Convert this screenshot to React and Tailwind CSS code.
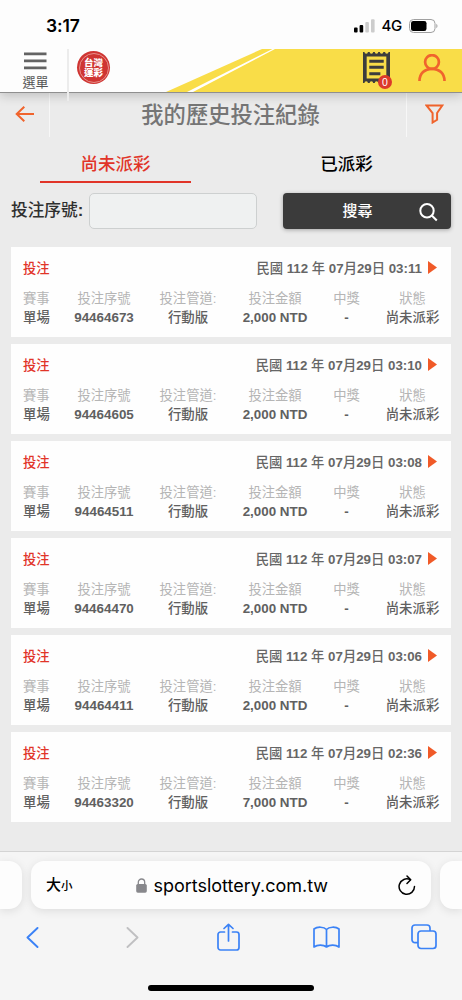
const FONT = 'font-["Liberation_Sans","Noto_Sans_CJK_TC",sans-serif]';

const records = [
  { id: '94464673', time: '03:11', amount: '2,000' },
  { id: '94464605', time: '03:10', amount: '2,000' },
  { id: '94464511', time: '03:08', amount: '2,000' },
  { id: '94464470', time: '03:07', amount: '2,000' },
  { id: '94464411', time: '03:06', amount: '2,000' },
  { id: '94463320', time: '02:36', amount: '7,000' },
];

function StatusBar() {
  return (
    <div className="relative z-20 flex h-[49px] shrink-0 items-start justify-between bg-[#fdfdfd] pt-[14px] pr-[24px] pl-[46px] text-black">
      <span className='font-["Inter","Noto_Sans_CJK_TC",sans-serif] text-[17.5px] leading-[23px] font-semibold tracking-[-0.1px]'>
        3:17
      </span>
      <div className="flex h-[23px] items-center">
        <svg width="21" height="14" viewBox="0 0 21 14" className="mr-[7px]">
          <rect x="0" y="8.5" width="3.6" height="5" rx="1" fill="#000" />
          <rect x="5.6" y="6" width="3.6" height="7.5" rx="1" fill="#000" />
          <rect x="11.3" y="3" width="3.6" height="10.5" rx="1" fill="#ccc" />
          <rect x="17" y="0.3" width="3.6" height="13.2" rx="1" fill="#ccc" />
        </svg>
        <span className='font-["Inter",sans-serif] text-[15px] leading-[23px] font-medium tracking-[-0.3px]'>4G</span>
        <svg width="29" height="14" viewBox="0 0 29 14" className="ml-[7px]">
          <rect x="0.5" y="0.5" width="25.5" height="13" rx="4" fill="none" stroke="#a0a0a0" />
          <rect x="2" y="2" width="15.5" height="10" rx="2.3" fill="#000" />
          <path d="M27.3 4.8c1.6.7 1.6 3.7 0 4.4z" fill="#a0a0a0" />
        </svg>
      </div>
    </div>
  );
}

function TicketIcon() {
  return (
    <svg width="27" height="31" viewBox="0 0 28 31" preserveAspectRatio="none" className="block">
      <path
        fill="#3d3d3d"
        fillRule="evenodd"
        d="M0 0h1.5a1.8 1.8 0 0 0 3.6 0h1.8a1.8 1.8 0 0 0 3.6 0h1.7a1.8 1.8 0 0 0 3.6 0h1.7a1.8 1.8 0 0 0 3.6 0h1.8a1.8 1.8 0 0 0 3.6 0H28v31h-1.5a1.8 1.8 0 0 0-3.6 0h-1.8a1.8 1.8 0 0 0-3.6 0h-1.7a1.8 1.8 0 0 0-3.6 0h-1.7a1.8 1.8 0 0 0-3.6 0H5.1a1.8 1.8 0 0 0-3.6 0H0zM3.8 4.5v22h20.4v-22z"
      />
      <path d="M6.5 9.2h15M6.5 15.3h15M6.5 21.8h11.5" stroke="#3d3d3d" strokeWidth="3" />
    </svg>
  );
}

function Header() {
  return (
    <header className="relative z-10 flex h-[44px] shrink-0 border-b border-[#8f8f8f] bg-[#fdfdfd] shadow-[0_3px_10px_rgba(0,0,0,0.18)]">
      <svg width="462" height="43" viewBox="0 0 462 43" className="absolute top-0 left-0">
        <path d="M166 43L262 0H462V43Z" fill="#f9dd48" />
        <path d="M187 43L272.500 0H275L193 43Z" fill="#fff" />
      </svg>
      <div className="relative flex w-[67px] shrink-0 flex-col items-center pt-[3px] pl-[4px]">
        <svg width="23" height="18" viewBox="0 0 23 18">
          <path d="M0 1.8h22.5M0 8.8h22.5M0 15.8h22.5" stroke="#636363" strokeWidth="2.8" />
        </svg>
        <span className="mt-[4px] text-[13px] leading-[18px] text-[#555]">選單</span>
      </div>
      <div className="relative h-[52px] w-[2px] shrink-0 bg-[#ececec]" />
      <div className="relative mt-[2px] ml-[8px] flex size-[33px] items-center justify-center rounded-full bg-[#cf3532]">
        <div className="absolute inset-[1.5px] rounded-full border border-[#e7908b]" />
        <div className="text-center text-[9.5px] leading-[9.5px] font-black text-white">
          台灣
          <br />
          運彩
        </div>
      </div>
      <div className="relative mt-[3px] ml-auto">
        <TicketIcon />
        <span className="absolute top-[23px] left-[15px] flex size-[14px] items-center justify-center rounded-full bg-[#dc3a2a] text-[10.500px] leading-none text-white">
          0
        </span>
      </div>
      <svg width="28" height="28" viewBox="0 0 28 28" className="relative mt-[5px] mr-[16px] ml-[28px]">
        <g fill="none" stroke="#f0642d" strokeWidth="2.7">
          <circle cx="14" cy="8" r="6.9" />
          <path d="M1.5 27c0-7.5 5.2-12.2 12.5-12.2S26.500 19.500 26.500 27" />
        </g>
      </svg>
    </header>
  );
}

function TitleBar() {
  return (
    <div className="flex h-[44px] shrink-0 bg-[#ebebeb]">
      <div className="flex w-[50px] items-center border-r border-[#f7f7f7] pl-[15px]">
        <svg width="20" height="16" viewBox="0 0 20 16" className="-mt-[3px]">
          <path d="M19 8H2M9.300 0.800L1.700 8l7.600 7.200" fill="none" stroke="#f0642d" strokeWidth="2" />
        </svg>
      </div>
      <h1 className="flex-1 pl-[5px] text-center text-[22.300px] leading-[45px] font-medium text-[#757575]">我的歷史投注紀錄</h1>
      <div className="flex w-[56px] items-center border-l border-[#f7f7f7] pl-[18px]">
        <svg width="19" height="20" viewBox="0 0 19 20" className="-mt-[2px]">
          <path
            d="M1.500 1.500h15.800l-5.200 7.500v6.800l-4.500 2.700v-9.500z"
            fill="none"
            stroke="#f0642d"
            strokeWidth="2"
          />
        </svg>
      </div>
    </div>
  );
}

function Cell({ label, value, className }) {
  return (
    <div className={className}>
      <div className="text-[13.300px] leading-[19px] text-[#b5b5b5]">{label}</div>
      <div className="text-[13.400px] leading-[19px] font-bold text-[#606060]">{value}</div>
    </div>
  );
}

// latin text is bold, chinese values use the medium weight
function Zh({ children }) {
  return <span className="font-medium">{children}</span>;
}

function RecordCard({ record }) {
  return (
    <div className="h-[90px] bg-[#fefefe] pt-[12px]">
      <div className="flex items-center justify-between pr-[14px] pl-[12px] leading-[20px]">
        <span className="text-[13.300px] font-medium text-[#e13428]">投注</span>
        <div className="flex items-center gap-[6px] text-[13.300px] font-bold text-[#666]">
          <span className="whitespace-nowrap">
            <Zh>民國</Zh> 112 <Zh>年</Zh> 07<Zh>月</Zh>29<Zh>日</Zh> {record.time}
          </span>
          <svg width="9" height="13" viewBox="0 0 9 13" className="-mt-[3px]">
            <path d="M0 0l9 6.500L0 13z" fill="#f05a28" />
          </svg>
        </div>
      </div>
      <div className="mt-[10px] flex text-center">
        <Cell className="w-[52px] pl-[12px] text-left" label="賽事" value={<Zh>單場</Zh>} />
        <Cell className="w-[82px]" label="投注序號" value={record.id} />
        <Cell className="w-[86px]" label="投注管道:" value={<Zh>行動版</Zh>} />
        <Cell className="w-[88px]" label="投注金額" value={`${record.amount} NTD`} />
        <Cell className="w-[55px]" label="中獎" value="-" />
        <Cell className="w-[77px]" label="狀態" value={<Zh>尚未派彩</Zh>} />
      </div>
    </div>
  );
}

function BrowserBar() {
  return (
    <div className="flex-1 border-t border-[#d4d4d4] bg-[#f5f5f5]">
      <div className="mt-[9px] flex justify-between overflow-x-clip">
        <div className="h-[48px] w-[22px] rounded-r-[13px] bg-[#fdfdfd] shadow-[0_2px_10px_rgba(0,0,0,0.1)]" />
        <div className="flex h-[48px] w-[400px] items-center rounded-[13px] bg-[#fdfdfd] px-[15px] text-black shadow-[0_2px_10px_rgba(0,0,0,0.1)]">
          <span className="text-[15px] leading-none font-medium">
            大<span className="text-[11.500px]">小</span>
          </span>
          <svg width="11" height="15" viewBox="0 0 11 15" className="ml-[63px]">
            <path d="M2.300 7V4.200a3.200 3.200 0 0 1 6.400 0V7" fill="none" stroke="#88888c" strokeWidth="1.300" />
            <rect x="0.200" y="6" width="10.600" height="8.700" rx="1.600" fill="#88888c" />
          </svg>
          <span className='ml-[7px] font-["Inter",sans-serif] text-[18px] tracking-[-0.020px]'>sportslottery.com.tw</span>
          <svg width="18" height="21" viewBox="0 0 18 21" className="ml-auto">
            <g fill="none" stroke="#000" strokeWidth="1.500" strokeLinecap="round" strokeLinejoin="round">
              <path d="M12.300 4.700A7.700 7.700 0 1 0 16.500 11.500" />
              <path d="M9 1l3.700 3.700L9 8.500" />
            </g>
          </svg>
        </div>
        <div className="h-[48px] w-[22px] rounded-l-[13px] bg-[#fdfdfd] shadow-[0_2px_10px_rgba(0,0,0,0.1)]" />
      </div>
      <div className="mt-[12px] flex h-[32px] items-center pl-[26px]">
        <svg width="13" height="21" viewBox="0 0 13 21" fill="none" stroke="#3b82f6" strokeWidth="1.900" strokeLinecap="round" strokeLinejoin="round">
          <path d="M11.500 1L1.500 10.500l10 9.500" />
        </svg>
        <svg width="13" height="21" viewBox="0 0 13 21" fill="none" stroke="#c0c0c2" strokeWidth="1.900" strokeLinecap="round" strokeLinejoin="round" className="ml-[87px]">
          <path d="M1.500 1l10 9.500-10 9.500" />
        </svg>
        <svg width="23" height="28" viewBox="0 0 23 28" fill="none" stroke="#3b82f6" strokeWidth="1.700" strokeLinecap="round" strokeLinejoin="round" className="ml-[78px]">
          <path d="M7.500 9H3.500a2.500 2.500 0 0 0-2.500 2.500v13A2.500 2.500 0 0 0 3.500 27h16a2.500 2.500 0 0 0 2.500-2.500v-13A2.500 2.500 0 0 0 19.500 9H15.500" />
          <path d="M11.500 18V1.500M7 5.500l4.500-4.200L16 5.500" />
        </svg>
        <svg width="27" height="22" viewBox="0 0 27 22" fill="none" stroke="#3b82f6" strokeWidth="1.700" strokeLinecap="round" strokeLinejoin="round" className="ml-[73px]">
          <path d="M13.500 3.500C11 .8 4.500.3 1 3v18c3.500-2.500 9.500-2.300 12.500 0 3-2.300 9-2.500 12.500 0V3C22.500.3 16 .8 13.500 3.500zM13.500 3.500V21" />
        </svg>
        <svg width="26" height="26" viewBox="0 0 26 26" fill="none" stroke="#3b82f6" strokeWidth="1.700" className="ml-[71px]">
          <rect x="7" y="7" width="18" height="17.500" rx="3" />
          <path d="M7 18.700H4a3 3 0 0 1-3-3V4a3 3 0 0 1 3-3h12a3 3 0 0 1 3 3v3" />
        </svg>
      </div>
      <div className="mx-auto mt-[32px] h-[6px] w-[166px] rounded-full bg-black" />
    </div>
  );
}

export default function App() {
  return (
    <div className={`flex h-[1000px] w-[462px] flex-col overflow-hidden bg-[#ebebeb] ${FONT}`}>
      <StatusBar />
      <Header />
      <TitleBar />
      <div className="flex h-[46px] text-center text-[17.500px] leading-[26px] font-medium">
        <div className="ml-[40px] h-[46px] w-[151px] border-b-[2.500px] border-[#e13428] pt-[14px] text-[#e13428]">尚未派彩</div>
        <div className="ml-[80px] w-[151px] pt-[14px] text-black">已派彩</div>
      </div>
      <div className="mt-[10px] flex h-[36px] items-center px-[11px]">
        <label className="w-[78px] text-[16.700px] leading-none font-medium whitespace-nowrap text-[#2f2f2f]">
          投注序號<span className="font-bold">:</span>
        </label>
        <input className="h-[36px] w-[168px] rounded-[5px] border border-[#cdd0d0] bg-[#eff1f1]" />
        <button className="relative ml-auto flex h-[36px] w-[168px] items-center justify-center rounded-[4px] bg-[#3b3b3b] pt-px pr-[19px] text-[15px] font-medium text-white shadow-[0_1px_4px_rgba(0,0,0,0.3)]">
          搜尋
          <svg width="19" height="19" viewBox="0 0 19 19" className="absolute top-[10px] right-[13px]" fill="none" stroke="#fff" strokeWidth="2">
            <circle cx="8" cy="7.700" r="6.700" />
            <path d="M12.800 12.500l5 5" />
          </svg>
        </button>
      </div>
      <div className="mt-[18px] flex flex-col gap-[7px] px-[11px]">
        {records.map((record) => (
          <RecordCard key={record.id} record={record} />
        ))}
      </div>
      <div className="h-[29px] shrink-0" />
      <BrowserBar />
    </div>
  );
}
